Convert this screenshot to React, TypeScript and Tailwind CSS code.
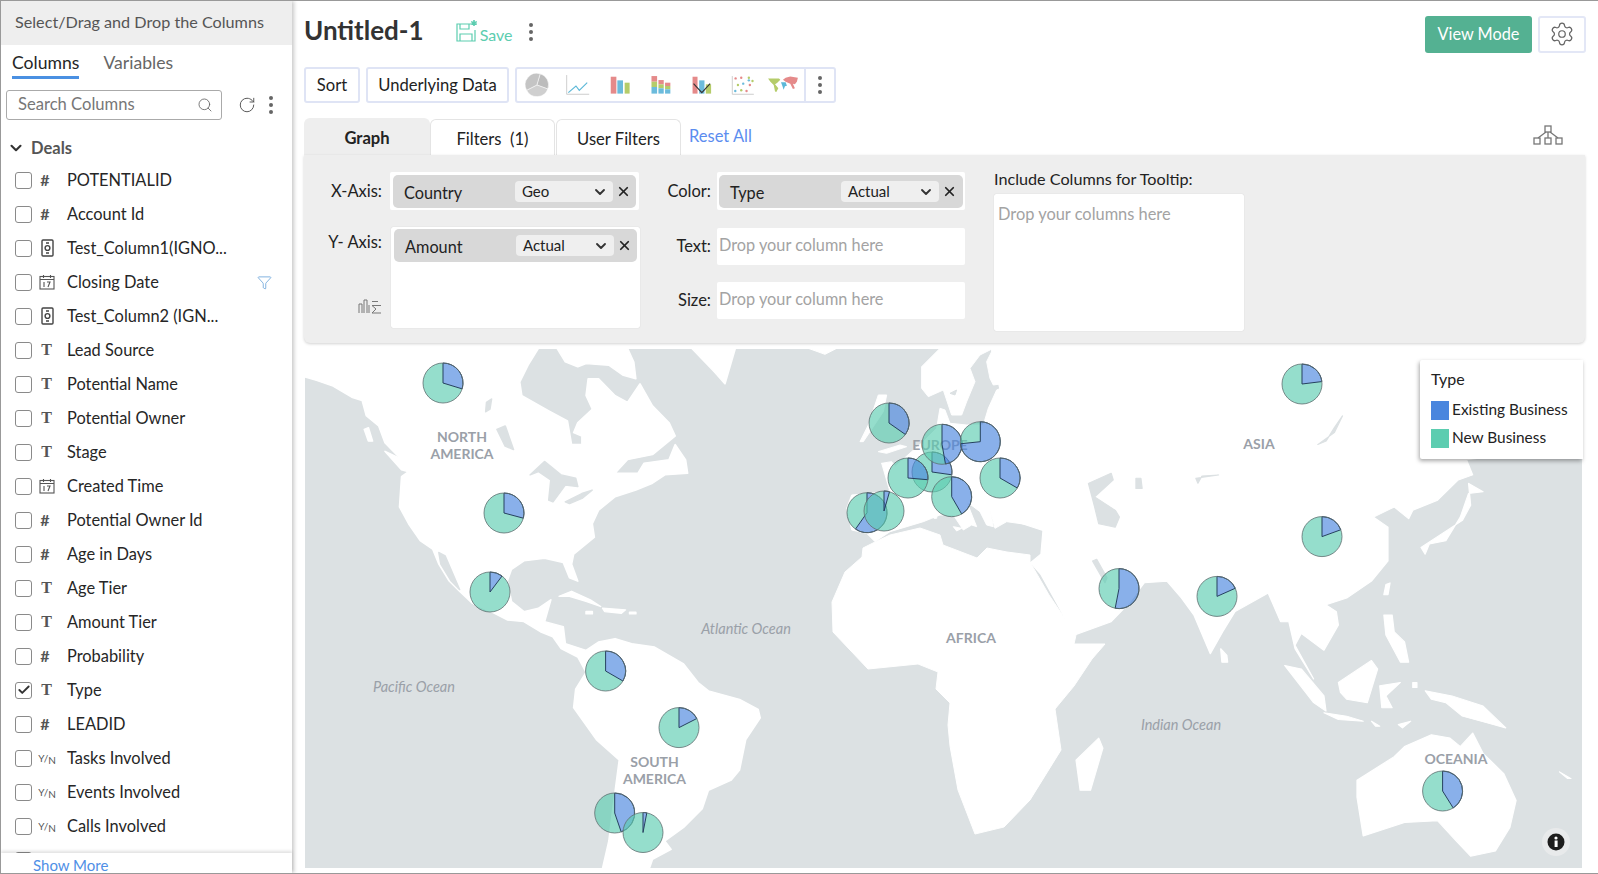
import { ChevronDown, Check, Filter, RotateCw, Search, Settings, X } from "lucide-react";

const columns = [
  ["num", "POTENTIALID"],
  ["num", "Account Id"],
  ["money", "Test_Column1(IGNO..."],
  ["date", "Closing Date"],
  ["money", "Test_Column2 (IGN..."],
  ["text", "Lead Source"],
  ["text", "Potential Name"],
  ["text", "Potential Owner"],
  ["text", "Stage"],
  ["date", "Created Time"],
  ["num", "Potential Owner Id"],
  ["num", "Age in Days"],
  ["text", "Age Tier"],
  ["text", "Amount Tier"],
  ["num", "Probability"],
  ["text", "Type"],
  ["num", "LEADID"],
  ["yn", "Tasks Involved"],
  ["yn", "Events Involved"],
  ["yn", "Calls Involved"],
];

// cx, cy, angle where the blue slice ends (clockwise from 12 o'clock)
const pies = [
  [443, 383, 107], [504, 513, 105], [490, 592, 37], [605.6, 671, 120], [679, 727.6, 63],
  [614.7, 813, 161], [643, 832.5, 11], [889, 423, 125], [867, 512.7, 215], [884, 511, 16],
  [932, 472, 98], [908, 478, 95], [951.7, 496.7, 150], [942, 444.3, 170], [980.3, 441.7, 264],
  [1000, 478, 120], [1302, 384, 83], [1322, 536.6, 70], [1217, 596.4, 66], [1119, 588.6, 191],
  [1442.6, 791, 148],
];

function Pie({ cx, cy, end }: { cx: number; cy: number; end: number }) {
  const r = 20;
  const a = (end * Math.PI) / 180;
  const ex = cx + r * Math.sin(a);
  const ey = cy - r * Math.cos(a);
  const large = end > 180 ? 1 : 0;
  return (
    <g>
      <path
        d={`M${cx} ${cy} L${ex} ${ey} A${r} ${r} 0 ${large ? 0 : 1} 1 ${cx} ${cy - r} Z`}
        fill="#5ccdb0"
        fillOpacity="0.65"
      />
      <path
        d={`M${cx} ${cy} L${cx} ${cy - r} A${r} ${r} 0 ${large} 1 ${ex} ${ey} Z`}
        fill="#4a86de"
        fillOpacity="0.65"
        stroke="#24405e"
        strokeWidth="1"
      />
      <circle cx={cx} cy={cy} r={r} fill="none" stroke="#5f6f70" strokeOpacity="0.8" strokeWidth="1" />
    </g>
  );
}

function Dots({ className }: { className: string }) {
  return (
    <span className={`flex flex-col gap-[3.5px] ${className}`}>
      <i className="block h-[3.5px] w-[3.5px] rounded-full bg-[#666]" />
      <i className="block h-[3.5px] w-[3.5px] rounded-full bg-[#666]" />
      <i className="block h-[3.5px] w-[3.5px] rounded-full bg-[#666]" />
    </span>
  );
}

function TypeIcon({ kind }: { kind: string }) {
  if (kind === "num") return <span className="-ml-[4px] text-[16px] font-bold text-[#555]">#</span>;
  if (kind === "text") return <span className="-ml-[1px] font-['Liberation_Serif',serif] text-[16px] font-bold text-[#555]">T</span>;
  if (kind === "yn")
    return (
      <span className="whitespace-nowrap text-[10px] text-[#555]">
        Y/<span className="relative top-[2px]">N</span>
      </span>
    );
  if (kind === "date")
    return (
      <svg width="16" height="16" viewBox="0 0 16 16" fill="none" stroke="#555" strokeWidth="1.1">
        <rect x="1" y="2.5" width="14" height="12.5" />
        <path d="M1 5.5h14M4.5 1v3M11.5 1v3" />
        <path d="M5 8v5M8 8h3l-2 5" strokeWidth="1.1" />
      </svg>
    );
  return (
    <svg width="13" height="18" viewBox="0 0 13 18" fill="none" stroke="#444" strokeWidth="1.4">
      <rect x="1" y="1" width="11" height="16" rx="1" />
      <circle cx="6.5" cy="9" r="2.4" />
      <path d="M5 4h3M5 14h3" />
    </svg>
  );
}

function ColumnRow({ kind, name }: { kind: string; name: string }) {
  const checked = name === "Type";
  return (
    <div className="relative flex h-[34px] shrink-0 items-center pl-[14px]">
      <span className="flex h-[17px] w-[17px] items-center justify-center rounded-[3px] border-[1.5px] border-[#8a8a8a] bg-white">
        {checked && <Check size={14} strokeWidth={3.2} className="text-[#333]" />}
      </span>
      <span className="ml-[6px] flex w-[18px] items-center justify-center">
        <TypeIcon kind={kind} />
      </span>
      <span className="ml-[11px] whitespace-nowrap text-[16.4px] text-[#262626]">{name}</span>
      {name === "Closing Date" && <Filter size={15} strokeWidth={1.2} className="absolute left-[256px] text-[#5b9bd5]" />}
    </div>
  );
}

function Sidebar() {
  return (
    <aside className="z-10 flex h-full w-[291px] shrink-0 flex-col bg-white shadow-[2px_0_4px_rgba(0,0,0,0.22)]">
      <div className="flex h-[44px] shrink-0 items-center bg-[#eeeeee] pb-[2px] pl-[14px] text-[16.2px] text-[#555]">
        Select/Drag and Drop the Columns
      </div>
      <div className="flex h-[34px] shrink-0 gap-[24px] pl-[11px] text-[17.6px]">
        <span className="flex items-center border-b-[3px] border-[#4a90e2] pt-[5px] text-[#262626]">Columns</span>
        <span className="flex items-center pt-[2px] text-[#666]">Variables</span>
      </div>
      <div className="mt-[11px] flex h-[30px] shrink-0 items-center pl-[5px]">
        <div className="flex h-[30px] w-[216px] items-center justify-between rounded-[3px] border border-[#aaa] pb-[1px] pl-[11px] pr-[8px] text-[16.6px] text-[#777]">
          Search Columns
          <Search size={16} strokeWidth={1.3} className="text-[#666]" />
        </div>
        <RotateCw size={18} strokeWidth={1.3} className="ml-[16px] text-[#555]" />
        <Dots className="ml-[13px]" />
      </div>
      <div className="mt-[14px] flex h-[28px] shrink-0 items-center pl-[6px] text-[16.5px] text-[#555]">
        <ChevronDown size={18} strokeWidth={2.8} className="text-[#333]" />
        <span className="ml-[6px] font-bold">Deals</span>
      </div>
      <div className="mt-[1px] flex min-h-0 flex-1 flex-col overflow-hidden">
        {columns.map(([kind, name]) => (
          <ColumnRow key={name} kind={kind} name={name} />
        ))}
        <div className="flex h-[34px] shrink-0 items-center pl-[14px]">
          <span className="h-[17px] w-[17px] rounded-[3px] border-[1.5px] border-[#8a8a8a]" />
        </div>
      </div>
      <div className="relative z-10 h-[20px] shrink-0 bg-white pl-[32px] text-[15px] leading-[24px] text-[#4f8fe6] shadow-[0_-2px_3px_rgba(0,0,0,0.12)]">
        Show More
      </div>
    </aside>
  );
}

function ChartIcons() {
  const dots = [
    ["#e58a8a", 705, 52], ["#e58a8a", 722, 50], ["#b5cc6a", 745, 50], ["#b5cc6a", 756, 60], ["#6bbbdc", 728, 68],
    ["#b5cc6a", 712, 72], ["#e58a8a", 748, 72], ["#6bbbdc", 704, 90], ["#b5cc6a", 722, 88], ["#e58a8a", 738, 90],
    ["#6bbbdc", 745, 58],
  ] as const;
  return (
    <svg width="289" height="34" viewBox="0 0 867 102" className="block">
      <g transform="translate(-47 -21)">
        <g transform="translate(-3 0)">
          <path d="M110 72 L120 38 A35 35 0 0 1 143 84 Z" fill="#bcbcbc" stroke="#fff" strokeWidth="1.5" />
          <path d="M110 72 L143 84 A35 35 0 0 1 79 88 Z" fill="#cfcfcf" stroke="#fff" strokeWidth="1.5" />
          <path d="M110 72 L79 88 A35 35 0 0 1 120 38 Z" fill="#c4c4c4" stroke="#fff" strokeWidth="1.5" />
          <path d="M200 42V100H268" fill="none" stroke="#c4c4c4" strokeWidth="2.5" />
          <path d="M205 95L228 75L238 88L262 65" fill="none" stroke="#5cb8d8" strokeWidth="3.5" />
        </g>
        <rect x="330" y="47" width="17" height="51" fill="#e58a8a" />
        <rect x="350" y="58" width="17" height="40" fill="#6bbbdc" />
        <rect x="372" y="65" width="15" height="33" fill="#b5cc6a" />
        <path d="M453 45h17v17h-17z" fill="#e58a8a" />
        <path d="M453 62h17v16h-17z" fill="#b5cc6a" />
        <path d="M453 78h17v20h-17z" fill="#6bbbdc" />
        <path d="M474 57h16v13h-16z" fill="#e58a8a" />
        <path d="M474 70h16v12h-16z" fill="#b5cc6a" />
        <path d="M474 82h16v16h-16z" fill="#6bbbdc" />
        <path d="M494 65h16v10h-16z" fill="#e58a8a" />
        <path d="M494 75h16v10h-16z" fill="#b5cc6a" />
        <path d="M494 85h16v13h-16z" fill="#6bbbdc" />
        <rect x="577" y="47" width="15" height="51" fill="#e58a8a" />
        <rect x="597" y="58" width="16" height="40" fill="#6bbbdc" />
        <rect x="617" y="70" width="16" height="28" fill="#b5cc6a" />
        <path d="M580 68L605 95L630 68" fill="none" stroke="#333" strokeWidth="3.5" />
        <g transform="translate(2 0)">
          <path d="M695 45V100H760" fill="none" stroke="#c4c4c4" strokeWidth="2.5" />
          {dots.map(([c, x, y]) => (
            <circle key={`${x}-${y}`} cx={x} cy={y} r="3.6" fill={c} />
          ))}
        </g>
        <path d="M805 52L838 52L842 56L832 66L826 70L836 82L830 93L826 92L822 72L812 62Z" fill="#b5cc6a" />
        <path d="M850 56L858 50L872 46L895 50L892 62L886 70L880 68L886 82L880 84L872 68L858 62Z" fill="#e58a8a" />
        <path d="M844 64L858 64L862 74L856 76L852 86L848 74Z" fill="#5cb8d8" />
      </g>
    </svg>
  );
}

function Chip({ name, mode }: { name: string; mode: string }) {
  return (
    <div className="flex h-[33px] items-center rounded-[5px] bg-[#d8d8d8] pl-[11px]">
      <span className="w-[111px] pt-[4px] text-[16.3px] text-[#222]">{name}</span>
      <div className="flex h-[21px] w-[98px] items-center justify-between rounded-[4px] bg-[#efefef] pl-[7px] pr-[5px] text-[15px] text-[#222]">
        {mode}
        <ChevronDown size={16} strokeWidth={2.8} className="text-[#333]" />
      </div>
      <X size={15} strokeWidth={2.8} className="ml-[3px] text-[#222]" />
    </div>
  );
}

function Label({ children, className }: { children: string; className: string }) {
  return <span className={`shrink-0 text-right text-[16.5px] text-[#222] ${className}`}>{children}</span>;
}

function Panel() {
  return (
    <div className="flex h-[188px] shrink-0 rounded-b-[6px] bg-[#eeeeee] pt-[17px] shadow-[0_1px_3px_rgba(0,0,0,0.18)]">
      <div className="flex w-[336px] shrink-0 flex-col gap-[17px]">
        <div className="flex items-center gap-[8px]">
          <Label className="w-[78px]">X-Axis:</Label>
          <div className="h-[38px] w-[249px] rounded-[2px] bg-white px-[3px] pt-[3px]">
            <Chip name="Country" mode="Geo" />
          </div>
        </div>
        <div className="flex gap-[9px]">
          <div className="flex w-[78px] shrink-0 flex-col items-end">
            <Label className="mt-[3px]">Y- Axis:</Label>
            <svg width="24" height="16" viewBox="0 0 24 16" fill="none" stroke="#777" strokeWidth="1" className="mt-[43px]">
              <path d="M1 15V6h3v9M6 15V2h3v13M11 15V7" />
              <path d="M23 7.5h-9l4 3.5-4 4h9M14 3.5h6" />
            </svg>
          </div>
          <div className="h-[101px] w-[249px] rounded-[2px] bg-white px-[3px] pt-[2px] shadow-[0_0_1px_rgba(0,0,0,0.2)]">
            <Chip name="Amount" mode="Actual" />
          </div>
        </div>
      </div>
      <div className="flex w-[325px] shrink-0 flex-col gap-[17.5px]">
        <div className="flex items-center gap-[6px]">
          <Label className="w-[71px]">Color:</Label>
          <div className="h-[38px] w-[248px] rounded-[2px] bg-white px-[2px] pt-[3px]">
            <Chip name="Type" mode="Actual" />
          </div>
        </div>
        {["Text:", "Size:"].map((t) => (
          <div key={t} className="flex items-center gap-[6px]">
            <Label className="w-[71px]">{t}</Label>
            <div className="flex h-[37px] w-[248px] items-center rounded-[2px] bg-white pb-[2px] pl-[2px] text-[16.3px] text-[#a3a3a3]">
              Drop your column here
            </div>
          </div>
        ))}
      </div>
      <div className="ml-[29px] w-[250px] shrink-0">
        <div className="-mt-[3px] mb-[5px] text-[16.2px] leading-[20px] text-[#222]">Include Columns for Tooltip:</div>
        <div className="h-[137px] rounded-[2px] bg-white pl-[4px] pt-[8px] text-[16.4px] text-[#a3a3a3] shadow-[0_0_1px_rgba(0,0,0,0.2)]">
          Drop your columns here
        </div>
      </div>
    </div>
  );
}

function WorldMap() {
  const labelClass = "fill-[#9aa0a8] text-[14px] font-bold";
  const oceanClass = "fill-[#9aa0a8] text-[14.5px] italic";
  return (
    <svg width="1277" height="519" viewBox="305 349 1277 519" className="block bg-[#dce1e3]">
      {/* americas, traced in crop coordinates */}
      <g transform="translate(300 345) scale(0.4146 0.3374)" fill="#fff" stroke="#fff" strokeWidth="4" strokeLinejoin="round">
        <polygon points="12,10 12,95 40,105 80,122 125,155 150,165 160,210 190,240 205,290 245,340 262,375 245,390 240,480 262,530 290,580 320,605 335,650 360,700 385,730 415,765 460,790 500,815 540,820 580,850 610,865 630,900 670,925 690,970 665,1020 660,1075 715,1170 770,1230 755,1370 745,1470 730,1550 843,1550 850,1525 895,1495 880,1470 925,1430 970,1375 985,1320 1040,1290 1060,1260 1075,1170 1110,1105 1105,1080 1060,1050 985,1025 960,1000 925,945 855,895 800,885 760,870 720,880 690,905 640,885 635,835 590,820 605,755 575,780 540,790 510,760 500,700 510,665 540,640 590,632 635,645 650,690 670,700 655,650 660,620 710,570 705,530 720,490 760,450 810,430 850,410 880,385 935,380 930,340 905,295 890,340 830,350 815,380 760,380 790,340 850,325 905,270 890,230 850,180 820,115 790,170 760,150 720,100 695,100 690,150 705,190 670,230 660,260 680,270 680,295 655,295 645,225 600,195 535,150 530,110 550,60 575,10" />
        <polygon points="620,10 790,10 805,50 810,100 780,90 745,60 690,55 670,65 640,50" />
        <polygon points="945,10 1050,10 1025,115 1000,80" />
        <polygon points="155,250 165,245 175,285 165,285" />
        <polygon points="205,315 240,335 260,375 245,370" />
        <polygon points="625,745 655,730 700,755 725,775 690,760 650,745" />
        <polygon points="730,780 785,785 775,795 735,790" />
        <polygon points="690,790 705,790 705,797 690,797" />
        <polygon points="795,792 810,792 810,797 795,797" />
        <g fill="#dce1e3" stroke="#dce1e3">
          <polygon points="555,385 590,345 630,385 665,395 670,420 640,415 610,465 600,460 605,400 575,375" />
          <polygon points="640,465 680,440 705,430 680,455 650,470" />
          <polygon points="450,170 462,160 458,190 448,198" />
          <polygon points="475,250 495,240 515,310 495,300" />
          <polygon points="335,615 350,625 385,725 365,700 340,650" />
        </g>
      </g>

      {/* europe */}
      <g transform="translate(780 345) scale(0.3333)" fill="#fff" stroke="#fff" strokeWidth="3" strokeLinejoin="round">
        <polygon points="85,10 170,10 135,28" />
        <polygon points="480,10 640,10 600,30 570,70 585,110 560,170 545,210 515,210 490,135 445,155 425,130 425,65" />
        <polygon points="200,490 215,450 330,440 305,355 345,365 395,320 430,290 470,250 480,190 495,195 510,235 560,240 610,240 625,190 650,135 710,110 640,120 630,100 620,50 640,10 960,10 960,560 790,555 750,540 680,530 645,550 630,490 640,545 620,540 600,500 560,470 590,545 575,540 550,555 520,510 480,510 455,520 430,530 330,560 285,590 260,565 215,555" />
        <polygon points="295,150 320,150 310,200 250,290 240,290 265,240" />
        <polygon points="295,320 360,300 380,305 320,325" />
        <polygon points="305,355 335,350 345,365 320,370" />
        <polygon points="520,545 545,550 530,558" />
        <polygon points="462,495 472,495 470,520 462,520" />
        <g fill="#dce1e3" stroke="#dce1e3">
          <polygon points="700,395 770,410 780,385 830,380 785,410 830,420 862,465 840,482 770,470 720,490 690,475 690,440" />
          <polygon points="720,80 750,75 755,115 735,120" />
          <polygon points="775,50 795,90 785,92" />
          <polygon points="510,145 530,135 525,150" />
        </g>
      </g>

      {/* africa, in page coordinates */}
      <polygon
        fill="#fff"
        stroke="#fff"
        strokeLinejoin="round"
        points="832,602 833,632 868,669 918,664 938,672 936,689 950,703 948,725 950,746 958,790 975,834 1004,827 1030,800 1061,750 1055,709 1074,686 1092,659 1105,644 1074,644 1076,635 1049,595 1030,562 1030,555 1007,552 987,548 977,558 943,545 940,535 920,528 890,535 875,542 863,548 862,557 845,572"
      />

      {/* asia and oceania */}
      <g transform="translate(950 345) scale(0.4132 0.3374)" fill="#fff" stroke="#fff" strokeWidth="3" strokeLinejoin="round">
        <polygon points="100,10 1530,10 1530,300 1250,340 1265,385 1230,400 1180,460 1120,490 1110,515 1075,480 1025,510 1060,540 1060,640 1020,700 960,750 910,770 935,790 940,830 905,905 850,855 835,890 880,990 835,900 820,820 800,820 770,735 690,790 660,850 630,915 590,800 560,750 525,700 470,705 430,770 390,820 300,860 265,780 220,680 195,645 220,620 225,550 100,500 150,300" />
        <polygon points="305,1230 360,1165 370,1195 340,1320 315,1320" />
        <polygon points="1140,600 1190,560 1240,520 1260,475 1255,410 1290,435 1255,440 1235,510 1200,580 1160,590 1150,620" />
        <polygon points="1055,710 1065,705 1060,740 1050,740" />
        <polygon points="1050,800 1070,800 1075,850 1100,880 1110,940 1090,940 1055,860" />
        <polygon points="655,900 670,920 672,940 658,940" />
        <polygon points="810,950 850,960 905,1040 910,1085 880,1060" />
        <polygon points="905,1090 960,1100 1000,1115 940,1110" />
        <polygon points="940,1000 1020,935 1035,960 1010,1060 960,1050 945,1030" />
        <polygon points="1040,1010 1090,1000 1055,1040 1070,1075 1045,1075" />
        <polygon points="1150,1025 1215,1040 1290,1070 1345,1135 1300,1120 1240,1100 1200,1060 1165,1050" />
        <polygon points="1020,1115 1040,1130 1030,1130" />
        <polygon points="1085,1125 1115,1115 1095,1135" />
        <polygon points="1120,1000 1130,1000 1130,1015 1120,1015" />
        <polygon points="1475,1265 1503,1285 1495,1285" />
        <polygon points="985,1290 1075,1220 1100,1190 1165,1155 1210,1165 1235,1190 1265,1150 1290,1210 1340,1270 1370,1350 1355,1430 1320,1500 1260,1515 1225,1470 1180,1410 1100,1415 1000,1455 985,1340" />
        <g fill="#dce1e3" stroke="#dce1e3">
          <polygon points="335,410 390,380 395,400 350,450 400,490 410,510 400,540 360,530 350,480" />
          <polygon points="450,395 462,395 465,425 450,425" />
          <polygon points="595,395 650,385 610,388 600,410" />
          <polygon points="890,295 930,260 950,210 930,245 910,285" />
          <polygon points="345,640 355,635 380,690 375,705" />
        </g>
      </g>

      <g textAnchor="middle" className="font-[Lato,sans-serif]">
        <text x="462" y="442" className={labelClass}>NORTH</text>
        <text x="462" y="459" className={labelClass}>AMERICA</text>
        <text x="654.5" y="767" className={labelClass}>SOUTH</text>
        <text x="654.5" y="784" className={labelClass}>AMERICA</text>
        <text x="971" y="643" className={labelClass}>AFRICA</text>
        <text x="1259" y="449" className={labelClass}>ASIA</text>
        <text x="1456" y="764" className={labelClass}>OCEANIA</text>
        <text x="940" y="450" className={labelClass}>EUROPE</text>
        <text x="746" y="634" className={oceanClass}>Atlantic Ocean</text>
        <text x="414" y="692" className={oceanClass}>Pacific Ocean</text>
        <text x="1181" y="730" className={oceanClass}>Indian Ocean</text>
      </g>

      {pies.map(([cx, cy, end]) => (
        <Pie key={`${cx}-${cy}`} cx={cx} cy={cy} end={end} />
      ))}
    </svg>
  );
}

function Legend() {
  return (
    <div className="absolute right-0 top-[11px] h-[99px] w-[163px] rounded-l-[2px] bg-white pl-[11px] pt-[9px] text-[15.4px] text-[#222] shadow-[-1px_2px_4px_rgba(0,0,0,0.35)]">
      <div className="h-[27px] text-[16px] leading-[20px]">Type</div>
      <div className="flex h-[28px] items-center gap-[3px]">
        <span className="h-[19px] w-[18px] bg-[#4a86de]" />
        Existing Business
      </div>
      <div className="flex h-[28px] items-center gap-[3px]">
        <span className="h-[19px] w-[18px] bg-[#5ccdb0]" />
        New Business
      </div>
    </div>
  );
}

export default function App() {
  return (
    <div className="flex h-[874px] w-[1598px] overflow-hidden border-y border-[#999] border-l font-[Lato,sans-serif]">
      <Sidebar />
      <main className="flex min-w-0 flex-1 flex-col bg-white pl-[12px] pr-[13px]">
        <header className="-mr-[1px] flex h-[66px] shrink-0 items-center">
          <h1 className="mb-[8px] text-[26px] font-bold text-[#333]">Untitled-1</h1>
          <svg width="23" height="24" viewBox="0 0 23 24" fill="none" stroke="#5ccdb0" strokeWidth="1.2" className="mb-[6px] ml-[32px]">
            <path d="M15 5H1v17h18V11" />
            <path d="M4 5v5h9V5M4 22v-7h12v7" />
            <path d="M18 1v6M15.2 2.6l5.6 2.8M20.8 2.6l-5.6 2.8" strokeWidth="1.6" />
          </svg>
          <span className="ml-[1px] mt-[2px] text-[16px] text-[#5ccdb0]">Save</span>
          <Dots className="mb-[4px] ml-[17px]" />
          <button className="ml-auto flex h-[37px] w-[107px] items-center justify-center rounded-[3px] bg-[#54b192] text-[16.3px] text-white">
            View Mode
          </button>
          <button className="ml-[6px] flex h-[37px] w-[48px] items-center justify-center rounded-[3px] border-2 border-[#e3e7f6] text-[#666]">
            <Settings size={26} strokeWidth={1.15} />
          </button>
        </header>

        <div className="flex h-[36px] shrink-0 gap-[6px] text-[16.6px] text-[#222]">
          <button className="h-full w-[56px] rounded-[3px] border-2 border-[#dfe4f5]">Sort</button>
          <button className="h-full w-[143px] rounded-[3px] border-2 border-[#dfe4f5]">Underlying Data</button>
          <div className="flex h-full w-[321px] items-center rounded-[3px] border-2 border-[#dfe4f5]">
            <ChartIcons />
            <span className="flex h-full w-[30px] items-center justify-center border-l-2 border-[#dfe4f5]">
              <Dots className="" />
            </span>
          </div>
        </div>

        <div className="mt-[15px] flex h-[37px] shrink-0 items-end text-[16.6px] text-[#222]">
          <div className="flex h-[37px] w-[126px] items-center justify-center rounded-t-[6px] bg-[#eeeeee] pt-[4px] font-bold">Graph</div>
          <div className="flex h-[36px] w-[125px] items-center justify-center rounded-t-[6px] border border-b-0 border-[#e4e4e4] pt-[4px]">Filters&nbsp; (1)</div>
          <div className="ml-[1px] flex h-[36px] w-[125px] items-center justify-center rounded-t-[6px] border border-b-0 border-[#e4e4e4] pt-[4px]">User Filters</div>
          <span className="ml-[8px] self-center text-[16.5px] text-[#5b8def]">Reset All</span>
          <svg width="30" height="20" viewBox="0 0 30 20" fill="none" stroke="#777" strokeWidth="1.3" className="mb-[10px] ml-auto mr-[22px]">
            <rect x="12" y="1" width="6" height="6" />
            <rect x="1" y="13" width="6" height="6" />
            <rect x="12" y="13" width="6" height="6" />
            <rect x="23" y="13" width="6" height="6" />
            <path d="M15 7v6M13 7L5 13M17 7l8 6" />
          </svg>
        </div>

        <Panel />

        <div className="relative mr-[2px] ml-[1px] mt-[6px] h-[519px] shrink-0">
          <WorldMap />
          <Legend />
          <span className="absolute bottom-[12px] right-[13px] flex h-[28px] w-[28px] items-center justify-center rounded-full bg-[#e8eaeb]">
            <svg width="18" height="18" viewBox="0 0 18 18">
              <circle cx="9" cy="9" r="8.5" fill="#1d1d1d" />
              <rect x="7.6" y="7.5" width="3" height="6.5" fill="#fff" />
              <circle cx="9" cy="5" r="1.6" fill="#fff" />
            </svg>
          </span>
        </div>
      </main>
    </div>
  );
}
